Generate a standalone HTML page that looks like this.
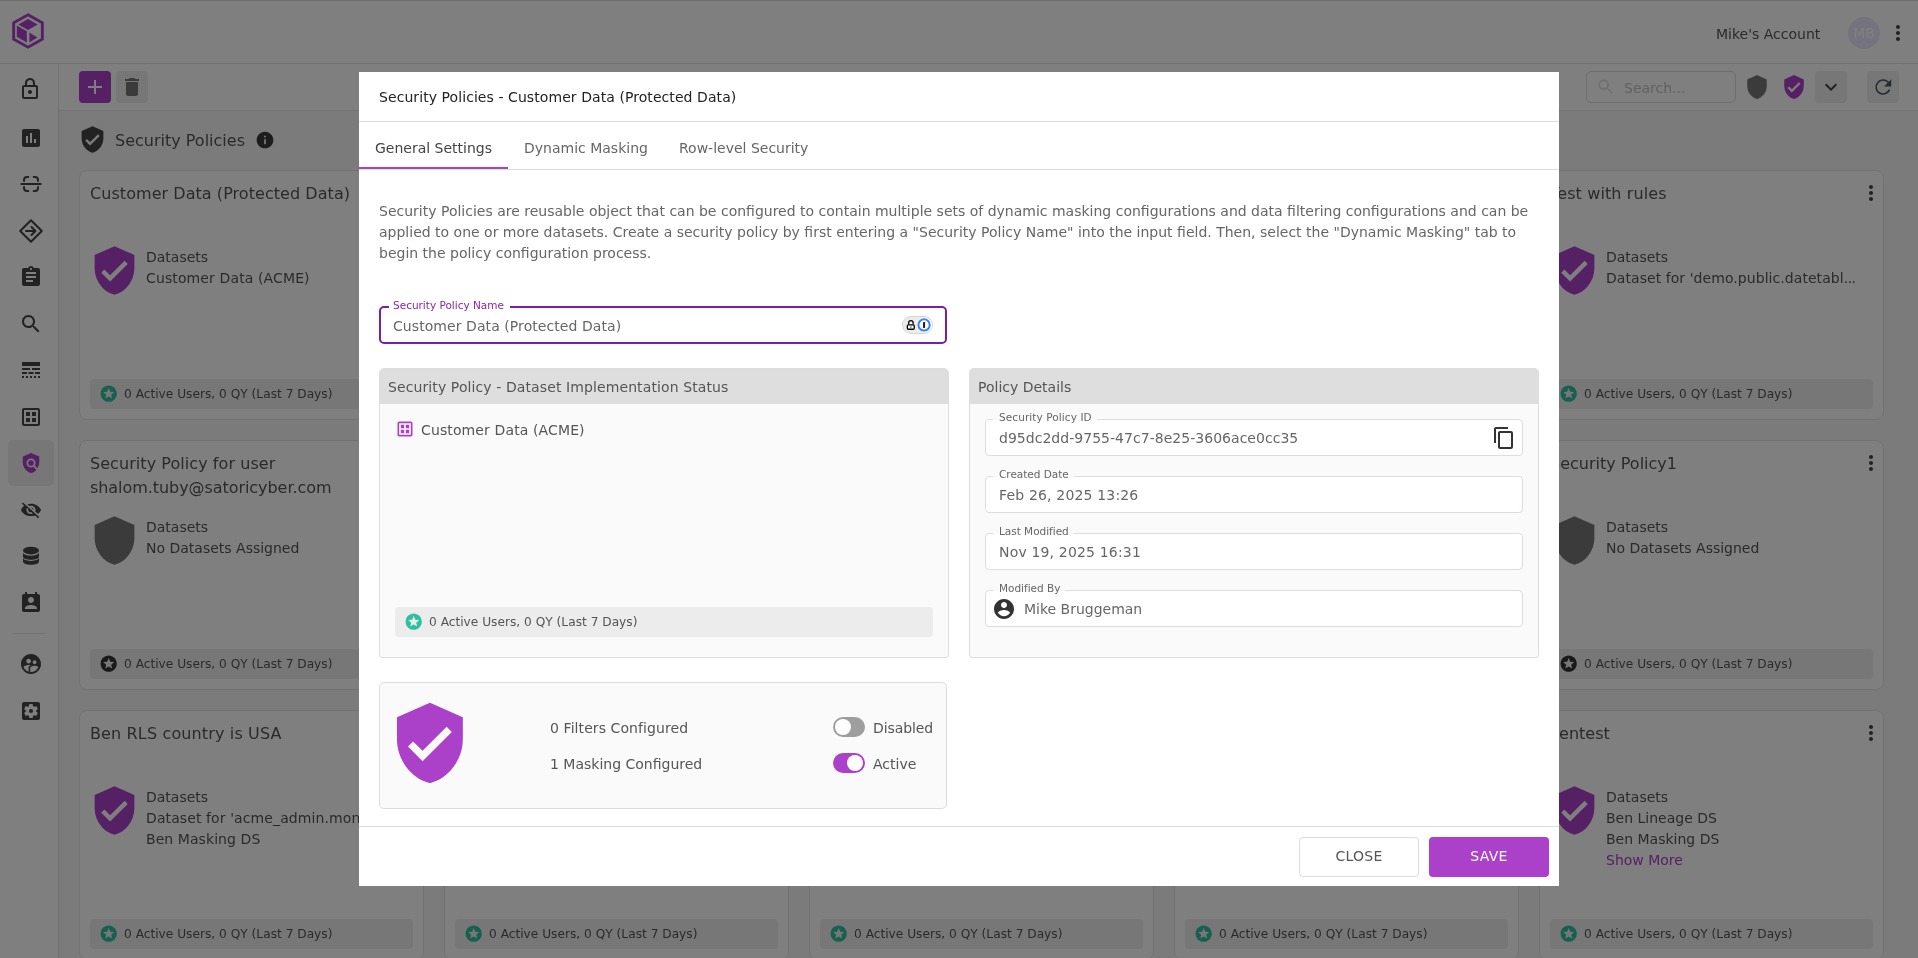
<!DOCTYPE html>
<html lang="en"><head><meta charset="utf-8"><title>Security Policies</title>
<style>
*{box-sizing:border-box;margin:0;padding:0}
html,body{width:1918px;height:958px;overflow:hidden;background:#f7f7f7;font-family:"DejaVu Sans","Liberation Sans",sans-serif;}
.a{position:absolute}
.t{white-space:nowrap}
#bg{position:absolute;left:0;top:0;width:1918px;height:958px;overflow:hidden;will-change:transform}
#modal{will-change:transform}
#ov{position:absolute;left:0;top:0;width:1918px;height:958px;background:rgba(0,0,0,.5)}
.card{position:absolute;width:345px;height:250px;background:#fff;border:1px solid #e4e4e4;border-radius:8px;overflow:hidden}
.chip{position:absolute;left:10px;top:208px;width:323px;height:30px;background:#efefef;border-radius:4px}
.fs{position:absolute;left:15px;width:538px;height:37px;border:1px solid #ddd;border-radius:4px;background:#fff}
.fs .lb{position:absolute;left:7px;top:-10px;padding:0 5px 0 6px;font-size:10.5px;line-height:14px;color:#666;white-space:nowrap;background:linear-gradient(#fafafa 0,#fafafa 10px,#fff 10px)}
.fs .v{position:absolute;left:13px;top:8px;font-size:14px;line-height:21px;color:#666;white-space:nowrap;letter-spacing:.17px}
</style></head><body>
<div id="bg">

<div class="a" style="left:0;top:0;width:1918px;height:64px;background:#fff;border-bottom:1px solid #e4e4e4;border-top:1px solid #dcdcdc"></div>
<div class="a" style="left:0;top:64px;width:59px;height:894px;background:#fff;border-right:1px solid #e4e4e4"></div>
<div class="a" style="left:59px;top:64px;width:1859px;height:47px;background:#fff;border-bottom:1px solid #e4e4e4"></div>
<svg class="a" style="left:12.3px;top:13px" width="32" height="36" viewBox="0 0 32 36" ><polygon points="16,1.8 30.35,9.8 30.35,26.2 16,34.2 1.65,26.2 1.65,9.8" fill="none" stroke="#ab40c9" stroke-width="2.9" stroke-linejoin="miter"/><polygon points="16,6.0 25.6,11.6 16,17 6.4,11.6" fill="#ab40c9"/><polygon points="4.8,12.4 14.8,18.2 14.8,29.6 4.8,23.8" fill="#ab40c9"/><polygon points="17.4,19.6 25.4,24.6 17.4,29.6" fill="#ab40c9"/></svg>
<div class="a t" style="left:1716px;top:24px;font-size:14px;line-height:21px;color:#555;">Mike's Account</div>
<div class="a" style="left:1848px;top:17px;width:32px;height:32px;border-radius:50%;background:#ebe6fb"></div>
<div class="a t" style="left:1853px;top:23px;font-size:14px;line-height:21px;color:#fff;width:22px;text-align:center;">MB</div>
<svg class="a" style="left:1886px;top:21px" width="24" height="24" viewBox="0 0 24 24" fill="#444" ><path d="M12 8c1.1 0 2-.9 2-2s-.9-2-2-2-2 .9-2 2 .9 2 2 2zm0 2c-1.1 0-2 .9-2 2s.9 2 2 2 2-.9 2-2-.9-2-2-2zm0 6c-1.1 0-2 .9-2 2s.9 2 2 2 2-.9 2-2-.9-2-2-2z"/></svg>
<svg class="a" style="left:18px;top:77px" width="24" height="24" viewBox="0 0 24 24" fill="#444" ><path d="M18 8h-1V6c0-2.76-2.24-5-5-5S7 3.24 7 6v2H6c-1.1 0-2 .9-2 2v10c0 1.1.9 2 2 2h12c1.1 0 2-.9 2-2V10c0-1.1-.9-2-2-2zM9 6c0-1.66 1.34-3 3-3s3 1.34 3 3v2H9V6zm9 14H6V10h12v10zm-6-3c1.1 0 2-.9 2-2s-.9-2-2-2-2 .9-2 2 .9 2 2 2z"/></svg>
<svg class="a" style="left:19px;top:126px" width="24" height="24" viewBox="0 0 24 24" fill="#444" ><path d="M19 3H5c-1.1 0-2 .9-2 2v14c0 1.1.9 2 2 2h14c1.1 0 2-.9 2-2V5c0-1.1-.9-2-2-2zM9 17H7v-7h2v7zm4 0h-2V7h2v10zm4 0h-2v-4h2v4z"/></svg>
<svg class="a" style="left:19px;top:172px" width="24" height="24" viewBox="0 0 24 24" ><g fill="none" stroke="#444" stroke-width="2" stroke-linecap="round"><path d="M5 9V8a3 3 0 0 1 3-3h1.3M14.7 5H16a3 3 0 0 1 3 3v1M19 15v1a3 3 0 0 1-3 3h-1.3M9.300 19H8a3 3 0 0 1-3-3v-1"/><path d="M2.400 12h19.300"/></g></svg>
<svg class="a" style="left:19px;top:219px" width="24" height="24" viewBox="0 0 24 24" ><g fill="none" stroke="#444" stroke-width="2" stroke-linecap="round" stroke-linejoin="round"><path d="M12 1.200L22.800 12 12 22.800 1.200 12z"/><path d="M7 12h9M12.5 8l4 4-4 4"/></g></svg>
<svg class="a" style="left:19px;top:265px" width="24" height="24" viewBox="0 0 24 24" fill="#444" ><path d="M19 3h-4.18C14.4 1.84 13.3 1 12 1c-1.3 0-2.4.84-2.82 2H5c-1.1 0-2 .9-2 2v14c0 1.1.9 2 2 2h14c1.1 0 2-.9 2-2V5c0-1.1-.9-2-2-2zm-7 0c.55 0 1 .45 1 1s-.45 1-1 1-1-.45-1-1 .45-1 1-1zm2 14H7v-2h7v2zm3-4H7v-2h10v2zm0-4H7V7h10v2z"/></svg>
<svg class="a" style="left:19px;top:312px" width="24" height="24" viewBox="0 0 24 24" fill="#444" ><path d="M15.5 14h-.79l-.28-.27C15.41 12.59 16 11.11 16 9.5 16 5.91 13.09 3 9.5 3S3 5.91 3 9.5 5.91 16 9.5 16c1.61 0 3.09-.59 4.23-1.57l.27.28v.79l5 4.99L20.49 19l-4.99-5zm-6 0C7.01 14 5 11.99 5 9.5S7.01 5 9.5 5 14 7.01 14 9.5 11.99 14 9.5 14z"/></svg>
<svg class="a" style="left:19px;top:358px" width="24" height="24" viewBox="0 0 24 24" fill="#444" ><path d="M3 16h5v-2H3v2zm6.5 0h5v-2h-5v2zm6.5 0h5v-2h-5v2zM3 20h2v-2H3v2zm4 0h2v-2H7v2zm4 0h2v-2h-2v2zm4 0h2v-2h-2v2zm4 0h2v-2h-2v2zM3 12h8v-2H3v2zm10 0h8v-2h-8v2zM3 4v4h18V4H3z"/></svg>
<svg class="a" style="left:19px;top:405px" width="24" height="24" viewBox="0 0 24 24" fill="#444" ><path d="M19 3H5c-1.1 0-2 .9-2 2v14c0 1.1.9 2 2 2h14c1.1 0 2-.9 2-2V5c0-1.1-.9-2-2-2zm0 16H5V5h14v14zM7 7h4v4H7V7zm6 0h4v4h-4V7zm-6 6h4v4H7v-4zm6 0h4v4h-4v-4z"/></svg>
<div class="a" style="left:8px;top:440px;width:46px;height:46px;border-radius:5px;background:#efefef"></div>
<svg class="a" style="left:20px;top:452px" width="22" height="22" viewBox="0 0 24 24" fill="#ab40c9" ><path d="M21 5l-9-4-9 4v6c0 5.55 3.84 10.74 9 12 2.3-.56 4.33-1.9 5.88-3.71l-3.12-3.12c-1.94 1.29-4.58 1.07-6.29-.64-1.95-1.95-1.95-5.12 0-7.07 1.95-1.95 5.12-1.95 7.07 0 1.71 1.71 1.92 4.35.64 6.29l2.9 2.9C20.29 15.69 21 13.38 21 11V5zM12 9a3 3 0 1 0 0 6 3 3 0 0 0 0-6z"/></svg>
<svg class="a" style="left:20px;top:500.3px" width="22" height="19.8" viewBox="0 0 24 24" fill="#444" preserveAspectRatio="none"><path d="M12 7c2.76 0 5 2.24 5 5 0 .65-.13 1.26-.36 1.83l2.92 2.92c1.51-1.26 2.7-2.89 3.43-4.75-1.73-4.39-6-7.5-11-7.5-1.4 0-2.74.25-3.98.7l2.16 2.16C10.74 7.13 11.35 7 12 7zM2 4.27l2.28 2.28.46.46C3.08 8.3 1.78 10.02 1 12c1.73 4.39 6 7.5 11 7.5 1.55 0 3.03-.3 4.38-.84l.42.42L19.73 22 21 20.73 3.27 3 2 4.27zM7.53 9.8l1.55 1.55c-.05.21-.08.43-.08.65 0 1.66 1.34 3 3 3 .22 0 .44-.03.65-.08l1.55 1.55c-.67.33-1.41.53-2.2.53-2.76 0-5-2.24-5-5 0-.79.2-1.53.53-2.2zm4.31-.78l3.15 3.15.02-.16c0-1.66-1.34-3-3-3l-.17.01z"/></svg>
<svg class="a" style="left:19px;top:544px" width="24" height="24" viewBox="0 0 24 24" ><g fill="#444"><ellipse cx="12" cy="6.6" rx="8" ry="3.9"/><path d="M4 8.3c0 2 3.6 3.400 8 3.400s8-1.400 8-3.400v4.100c0 2-3.600 3.300-8 3.300s-8-1.300-8-3.300z"/><path d="M4 13.600c0 2 3.600 3.300 8 3.300s8-1.300 8-3.300v3.900c0 2-3.600 3.300-8 3.300s-8-1.300-8-3.300z"/></g></svg>
<svg class="a" style="left:19px;top:591px" width="24" height="24" viewBox="0 0 24 24" fill="#444" ><path d="M19 3h-1V1h-2v2H8V1H6v2H5c-1.11 0-2 .9-2 2v14c0 1.1.89 2 2 2h14c1.1 0 2-.9 2-2V5c0-1.1-.9-2-2-2zm-7 3c1.66 0 3 1.34 3 3s-1.34 3-3 3-3-1.34-3-3 1.34-3 3-3zm6 12H6v-1c0-2 4-3.1 6-3.1s6 1.1 6 3.1v1z"/></svg>
<div class="a" style="left:13px;top:633px;width:32px;height:1px;background:#e4e4e4"></div>
<svg class="a" style="left:19px;top:652px" width="24" height="24" viewBox="0 0 24 24" fill="#444" ><path d="M11.99 2c-5.52 0-10 4.48-10 10s4.48 10 10 10 10-4.48 10-10-4.48-10-10-10zm3.61 6.34c1.07 0 1.93.86 1.93 1.93 0 1.07-.86 1.93-1.93 1.93-1.07 0-1.93-.86-1.93-1.93-.01-1.07.86-1.93 1.93-1.93zm-6-1.58c1.3 0 2.36 1.06 2.36 2.36 0 1.3-1.06 2.36-2.36 2.36s-2.36-1.06-2.36-2.36c0-1.31 1.05-2.36 2.36-2.36zm0 9.13v3.75c-2.4-.75-4.3-2.6-5.14-4.96 1.05-1.12 3.67-1.69 5.14-1.69.53 0 1.2.08 1.9.22-1.64.87-1.9 2.02-1.9 2.68zM11.99 20c-.27 0-.53-.01-.79-.04v-4.07c0-1.42 2.94-2.13 4.4-2.13 1.07 0 2.92.39 3.84 1.15-1.17 2.97-4.06 5.09-7.45 5.09z"/></svg>
<svg class="a" style="left:19px;top:699px" width="24" height="24" viewBox="0 0 24 24" fill="#444" ><path d="M12 10c-1.1 0-2 .9-2 2s.9 2 2 2 2-.9 2-2-.9-2-2-2zm7-7H5c-1.11 0-2 .9-2 2v14c0 1.1.89 2 2 2h14c1.11 0 2-.9 2-2V5c0-1.1-.89-2-2-2zm-1.75 9c0 .23-.02.46-.05.68l1.48 1.16c.13.11.17.3.08.45l-1.4 2.42c-.09.15-.27.21-.43.15l-1.74-.7c-.36.28-.76.51-1.18.69l-.26 1.85c-.03.17-.18.3-.35.3h-2.8c-.17 0-.32-.13-.35-.29l-.26-1.85c-.43-.18-.82-.41-1.18-.69l-1.74.7c-.16.06-.34 0-.43-.15l-1.4-2.42c-.09-.15-.05-.34.08-.45l1.48-1.16c-.03-.23-.05-.46-.05-.69 0-.23.02-.46.05-.68l-1.48-1.16c-.13-.11-.17-.3-.08-.45l1.4-2.42c.09-.15.27-.21.43-.15l1.74.7c.36-.28.76-.51 1.18-.69l.26-1.85c.03-.17.18-.3.35-.3h2.8c.17 0 .32.13.35.29l.26 1.85c.43.18.82.41 1.18.69l1.74-.7c.16-.06.34 0 .43.15l1.4 2.42c.09.15.05.34-.08.45l-1.48 1.16c.03.23.05.46.05.69z"/></svg>
<div class="a" style="left:79px;top:71px;width:32px;height:32px;border-radius:4px;background:#ab40c9"></div>
<svg class="a" style="left:83px;top:75px" width="24" height="24" viewBox="0 0 24 24" fill="#fff" ><path d="M19 13h-6v6h-2v-6H5v-2h6V5h2v6h6v2z"/></svg>
<div class="a" style="left:116px;top:71px;width:32px;height:32px;border-radius:4px;background:#efefef"></div>
<svg class="a" style="left:120px;top:75px" width="24" height="24" viewBox="0 0 24 24" fill="#777" ><path d="M6 19c0 1.1.9 2 2 2h8c1.1 0 2-.9 2-2V7H6v12zM19 4h-3.5l-1-1h-5l-1 1H5v2h14V4z"/></svg>
<div class="a" style="left:1586px;top:71px;width:150px;height:32px;border-radius:5px;border:1px solid #dcdcdc;background:#fff"></div>
<svg class="a" style="left:1596.2px;top:77px" width="19.5" height="19.5" viewBox="0 0 24 24" fill="#dedede" ><path d="M15.5 14h-.79l-.28-.27C15.41 12.59 16 11.11 16 9.5 16 5.91 13.09 3 9.5 3S3 5.91 3 9.5 5.91 16 9.5 16c1.61 0 3.09-.59 4.23-1.57l.27.28v.79l5 4.99L20.49 19l-4.99-5zm-6 0C7.01 14 5 11.99 5 9.5S7.01 5 9.5 5 14 7.01 14 9.5 11.99 14 9.5 14z"/></svg>
<div class="a t" style="left:1624px;top:78px;font-size:14px;line-height:21px;color:#c2c2c2;">Search...</div>
<svg class="a" style="left:1744px;top:74px" width="26" height="26" viewBox="0 0 24 24" fill="#777" ><path d="M12 1L3 5v6c0 5.55 3.84 10.74 9 12 5.16-1.26 9-6.45 9-12V5l-9-4z"/></svg>
<svg class="a" style="left:1781px;top:74px" width="26" height="26" viewBox="0 0 24 24" fill="#ab40c9" ><path d="M12 1L3 5v6c0 5.55 3.84 10.74 9 12 5.16-1.26 9-6.45 9-12V5l-9-4zm-2 16l-4-4 1.41-1.41L10 14.17l6.59-6.59L18 9l-8 8z"/></svg>
<div class="a" style="left:1815px;top:71px;width:32px;height:32px;border-radius:4px;background:#efefef"></div>
<svg class="a" style="left:1819px;top:75px" width="24" height="24" viewBox="0 0 24 24" fill="#444" ><path d="M16.59 8.59L12 13.17 7.41 8.59 6 10l6 6 6-6z"/></svg>
<div class="a" style="left:1867px;top:71px;width:32px;height:32px;border-radius:4px;background:#efefef"></div>
<svg class="a" style="left:1871px;top:75px" width="24" height="24" viewBox="0 0 24 24" ><g fill="none" stroke="#3f5866" stroke-width="1.6"><path d="M18.6 14.6A7 7 0 1 1 17.2 7.2"/></g><path d="M20.200 4.300v7.100h-7.100z" fill="#3f5866"/></svg>
<svg class="a" style="left:77.6px;top:125.3px" width="29" height="29" viewBox="0 0 24 24" fill="#444" ><path d="M12 1L3 5v6c0 5.55 3.84 10.74 9 12 5.16-1.26 9-6.45 9-12V5l-9-4zm-2 16l-4-4 1.41-1.41L10 14.17l6.59-6.59L18 9l-8 8z"/></svg>
<div class="a t" style="left:115px;top:129px;font-size:16px;line-height:24px;color:#555;">Security Policies</div>
<svg class="a" style="left:255px;top:130px" width="20" height="20" viewBox="0 0 24 24" fill="#3a3a3a" ><path d="M12 2C6.48 2 2 6.48 2 12s4.48 10 10 10 10-4.48 10-10S17.52 2 12 2zm1 15h-2v-6h2v6zm0-8h-2V7h2v2z"/></svg>
<div class="card" style="left:79px;top:170px"><div class="a" style="left:10px;top:11px;width:290px;font-size:16px;line-height:24px;color:#555"><span style='letter-spacing:.055px'>Customer Data (Protected Data)</span></div><svg class="a" style="left:319px;top:10px" width="24" height="24" viewBox="0 0 24 24" fill="#444" ><path d="M12 8c1.1 0 2-.9 2-2s-.9-2-2-2-2 .9-2 2 .9 2 2 2zm0 2c-1.1 0-2 .9-2 2s.9 2 2 2 2-.9 2-2-.9-2-2-2zm0 6c-1.1 0-2 .9-2 2s.9 2 2 2 2-.9 2-2-.9-2-2-2z"/></svg><svg class="a" style="left:7.95px;top:72.9px" width="53" height="53" viewBox="0 0 24 24" fill="#ab40c9" ><path d="M12 1L3 5v6c0 5.55 3.84 10.74 9 12 5.16-1.26 9-6.45 9-12V5l-9-4zm-2 16l-4-4 1.41-1.41L10 14.17l6.59-6.59L18 9l-8 8z"/></svg><div class="a t" style="left:66px;top:76px;font-size:14px;line-height:21px;color:#555">Datasets<br><span style='letter-spacing:.12px'>Customer Data (ACME)</span></div><div class="chip"><svg class="a" style="left:9.3px;top:5.3px" width="19.4" height="19.4" viewBox="0 0 24 24" fill="#2cc1a0" ><path d="M11.99 2C6.47 2 2 6.48 2 12s4.47 10 9.99 10C17.52 22 22 17.52 22 12S17.52 2 11.99 2zm4.24 16L12 15.45 7.77 18l1.12-4.81-3.73-3.23 4.92-.42L12 5l1.92 4.53 4.92.42-3.73 3.23L16.23 18z"/></svg><div class="a t" style="left:34px;top:6px;font-size:12.2px;line-height:18px;color:#555">0 Active Users, 0 QY (Last 7 Days)</div></div></div>
<div class="card" style="left:444px;top:170px"><div class="a" style="left:10px;top:11px;width:290px;font-size:16px;line-height:24px;color:#555">Finance Data Masking</div><svg class="a" style="left:319px;top:10px" width="24" height="24" viewBox="0 0 24 24" fill="#444" ><path d="M12 8c1.1 0 2-.9 2-2s-.9-2-2-2-2 .9-2 2 .9 2 2 2zm0 2c-1.1 0-2 .9-2 2s.9 2 2 2 2-.9 2-2-.9-2-2-2zm0 6c-1.1 0-2 .9-2 2s.9 2 2 2 2-.9 2-2-.9-2-2-2z"/></svg><svg class="a" style="left:7.95px;top:72.9px" width="53" height="53" viewBox="0 0 24 24" fill="#ab40c9" ><path d="M12 1L3 5v6c0 5.55 3.84 10.74 9 12 5.16-1.26 9-6.45 9-12V5l-9-4zm-2 16l-4-4 1.41-1.41L10 14.17l6.59-6.59L18 9l-8 8z"/></svg><div class="a t" style="left:66px;top:76px;font-size:14px;line-height:21px;color:#555">Datasets<br>Finance DS</div><div class="chip"><svg class="a" style="left:9.3px;top:5.3px" width="19.4" height="19.4" viewBox="0 0 24 24" fill="#2cc1a0" ><path d="M11.99 2C6.47 2 2 6.48 2 12s4.47 10 9.99 10C17.52 22 22 17.52 22 12S17.52 2 11.99 2zm4.24 16L12 15.45 7.77 18l1.12-4.81-3.73-3.23 4.92-.42L12 5l1.92 4.53 4.92.42-3.73 3.23L16.23 18z"/></svg><div class="a t" style="left:34px;top:6px;font-size:12.2px;line-height:18px;color:#555">0 Active Users, 0 QY (Last 7 Days)</div></div></div>
<div class="card" style="left:809px;top:170px"><div class="a" style="left:10px;top:11px;width:290px;font-size:16px;line-height:24px;color:#555">HR Records Policy</div><svg class="a" style="left:319px;top:10px" width="24" height="24" viewBox="0 0 24 24" fill="#444" ><path d="M12 8c1.1 0 2-.9 2-2s-.9-2-2-2-2 .9-2 2 .9 2 2 2zm0 2c-1.1 0-2 .9-2 2s.9 2 2 2 2-.9 2-2-.9-2-2-2zm0 6c-1.1 0-2 .9-2 2s.9 2 2 2 2-.9 2-2-.9-2-2-2z"/></svg><svg class="a" style="left:7.95px;top:72.9px" width="53" height="53" viewBox="0 0 24 24" fill="#ab40c9" ><path d="M12 1L3 5v6c0 5.55 3.84 10.74 9 12 5.16-1.26 9-6.45 9-12V5l-9-4zm-2 16l-4-4 1.41-1.41L10 14.17l6.59-6.59L18 9l-8 8z"/></svg><div class="a t" style="left:66px;top:76px;font-size:14px;line-height:21px;color:#555">Datasets<br>HR DS</div><div class="chip"><svg class="a" style="left:9.3px;top:5.3px" width="19.4" height="19.4" viewBox="0 0 24 24" fill="#2cc1a0" ><path d="M11.99 2C6.47 2 2 6.48 2 12s4.47 10 9.99 10C17.52 22 22 17.52 22 12S17.52 2 11.99 2zm4.24 16L12 15.45 7.77 18l1.12-4.81-3.73-3.23 4.92-.42L12 5l1.92 4.53 4.92.42-3.73 3.23L16.23 18z"/></svg><div class="a t" style="left:34px;top:6px;font-size:12.2px;line-height:18px;color:#555">0 Active Users, 0 QY (Last 7 Days)</div></div></div>
<div class="card" style="left:1174px;top:170px"><div class="a" style="left:10px;top:11px;width:290px;font-size:16px;line-height:24px;color:#555">Marketing Analytics</div><svg class="a" style="left:319px;top:10px" width="24" height="24" viewBox="0 0 24 24" fill="#444" ><path d="M12 8c1.1 0 2-.9 2-2s-.9-2-2-2-2 .9-2 2 .9 2 2 2zm0 2c-1.1 0-2 .9-2 2s.9 2 2 2 2-.9 2-2-.9-2-2-2zm0 6c-1.1 0-2 .9-2 2s.9 2 2 2 2-.9 2-2-.9-2-2-2z"/></svg><svg class="a" style="left:7.95px;top:72.9px" width="53" height="53" viewBox="0 0 24 24" fill="#777" ><path d="M12 1L3 5v6c0 5.55 3.84 10.74 9 12 5.16-1.26 9-6.45 9-12V5l-9-4z"/></svg><div class="a t" style="left:66px;top:76px;font-size:14px;line-height:21px;color:#555">Datasets<br>No Datasets Assigned</div><div class="chip"><svg class="a" style="left:9.3px;top:5.3px" width="19.4" height="19.4" viewBox="0 0 24 24" fill="#333" ><path d="M11.99 2C6.47 2 2 6.48 2 12s4.47 10 9.99 10C17.52 22 22 17.52 22 12S17.52 2 11.99 2zm4.24 16L12 15.45 7.77 18l1.12-4.81-3.73-3.23 4.92-.42L12 5l1.92 4.53 4.92.42-3.73 3.23L16.23 18z"/></svg><div class="a t" style="left:34px;top:6px;font-size:12.2px;line-height:18px;color:#555">0 Active Users, 0 QY (Last 7 Days)</div></div></div>
<div class="card" style="left:1539px;top:170px"><div class="a" style="left:10px;top:11px;width:290px;font-size:16px;line-height:24px;color:#555"><span style='letter-spacing:.12px'>Test with rules</span></div><svg class="a" style="left:319px;top:10px" width="24" height="24" viewBox="0 0 24 24" fill="#444" ><path d="M12 8c1.1 0 2-.9 2-2s-.9-2-2-2-2 .9-2 2 .9 2 2 2zm0 2c-1.1 0-2 .9-2 2s.9 2 2 2 2-.9 2-2-.9-2-2-2zm0 6c-1.1 0-2 .9-2 2s.9 2 2 2 2-.9 2-2-.9-2-2-2z"/></svg><svg class="a" style="left:7.95px;top:72.9px" width="53" height="53" viewBox="0 0 24 24" fill="#ab40c9" ><path d="M12 1L3 5v6c0 5.55 3.84 10.74 9 12 5.16-1.26 9-6.45 9-12V5l-9-4zm-2 16l-4-4 1.41-1.41L10 14.17l6.59-6.59L18 9l-8 8z"/></svg><div class="a t" style="left:66px;top:76px;font-size:14px;line-height:21px;color:#555">Datasets<br><span style='letter-spacing:.06px'>Dataset for 'demo.public.datetabl</span><span style='letter-spacing:-.5px'>...</span></div><div class="chip"><svg class="a" style="left:9.3px;top:5.3px" width="19.4" height="19.4" viewBox="0 0 24 24" fill="#2cc1a0" ><path d="M11.99 2C6.47 2 2 6.48 2 12s4.47 10 9.99 10C17.52 22 22 17.52 22 12S17.52 2 11.99 2zm4.24 16L12 15.45 7.77 18l1.12-4.81-3.73-3.23 4.92-.42L12 5l1.92 4.53 4.92.42-3.73 3.23L16.23 18z"/></svg><div class="a t" style="left:34px;top:6px;font-size:12.2px;line-height:18px;color:#555">0 Active Users, 0 QY (Last 7 Days)</div></div></div>
<div class="card" style="left:79px;top:440px"><div class="a" style="left:10px;top:11px;width:290px;font-size:16px;line-height:24px;color:#555"><span style='letter-spacing:.06px'>Security Policy for user</span><br><span style='letter-spacing:-.06px'>shalom.tuby@satoricyber.com</span></div><svg class="a" style="left:319px;top:10px" width="24" height="24" viewBox="0 0 24 24" fill="#444" ><path d="M12 8c1.1 0 2-.9 2-2s-.9-2-2-2-2 .9-2 2 .9 2 2 2zm0 2c-1.1 0-2 .9-2 2s.9 2 2 2 2-.9 2-2-.9-2-2-2zm0 6c-1.1 0-2 .9-2 2s.9 2 2 2 2-.9 2-2-.9-2-2-2z"/></svg><svg class="a" style="left:7.95px;top:72.9px" width="53" height="53" viewBox="0 0 24 24" fill="#777" ><path d="M12 1L3 5v6c0 5.55 3.84 10.74 9 12 5.16-1.26 9-6.45 9-12V5l-9-4z"/></svg><div class="a t" style="left:66px;top:76px;font-size:14px;line-height:21px;color:#555">Datasets<br>No Datasets Assigned</div><div class="chip"><svg class="a" style="left:9.3px;top:5.3px" width="19.4" height="19.4" viewBox="0 0 24 24" fill="#333" ><path d="M11.99 2C6.47 2 2 6.48 2 12s4.47 10 9.99 10C17.52 22 22 17.52 22 12S17.52 2 11.99 2zm4.24 16L12 15.45 7.77 18l1.12-4.81-3.73-3.23 4.92-.42L12 5l1.92 4.53 4.92.42-3.73 3.23L16.23 18z"/></svg><div class="a t" style="left:34px;top:6px;font-size:12.2px;line-height:18px;color:#555">0 Active Users, 0 QY (Last 7 Days)</div></div></div>
<div class="card" style="left:444px;top:440px"><div class="a" style="left:10px;top:11px;width:290px;font-size:16px;line-height:24px;color:#555">Sales Policy</div><svg class="a" style="left:319px;top:10px" width="24" height="24" viewBox="0 0 24 24" fill="#444" ><path d="M12 8c1.1 0 2-.9 2-2s-.9-2-2-2-2 .9-2 2 .9 2 2 2zm0 2c-1.1 0-2 .9-2 2s.9 2 2 2 2-.9 2-2-.9-2-2-2zm0 6c-1.1 0-2 .9-2 2s.9 2 2 2 2-.9 2-2-.9-2-2-2z"/></svg><svg class="a" style="left:7.95px;top:72.9px" width="53" height="53" viewBox="0 0 24 24" fill="#777" ><path d="M12 1L3 5v6c0 5.55 3.84 10.74 9 12 5.16-1.26 9-6.45 9-12V5l-9-4z"/></svg><div class="a t" style="left:66px;top:76px;font-size:14px;line-height:21px;color:#555">Datasets<br>No Datasets Assigned</div><div class="chip"><svg class="a" style="left:9.3px;top:5.3px" width="19.4" height="19.4" viewBox="0 0 24 24" fill="#333" ><path d="M11.99 2C6.47 2 2 6.48 2 12s4.47 10 9.99 10C17.52 22 22 17.52 22 12S17.52 2 11.99 2zm4.24 16L12 15.45 7.77 18l1.12-4.81-3.73-3.23 4.92-.42L12 5l1.92 4.53 4.92.42-3.73 3.23L16.23 18z"/></svg><div class="a t" style="left:34px;top:6px;font-size:12.2px;line-height:18px;color:#555">0 Active Users, 0 QY (Last 7 Days)</div></div></div>
<div class="card" style="left:809px;top:440px"><div class="a" style="left:10px;top:11px;width:290px;font-size:16px;line-height:24px;color:#555">Support Policy</div><svg class="a" style="left:319px;top:10px" width="24" height="24" viewBox="0 0 24 24" fill="#444" ><path d="M12 8c1.1 0 2-.9 2-2s-.9-2-2-2-2 .9-2 2 .9 2 2 2zm0 2c-1.1 0-2 .9-2 2s.9 2 2 2 2-.9 2-2-.9-2-2-2zm0 6c-1.1 0-2 .9-2 2s.9 2 2 2 2-.9 2-2-.9-2-2-2z"/></svg><svg class="a" style="left:7.95px;top:72.9px" width="53" height="53" viewBox="0 0 24 24" fill="#ab40c9" ><path d="M12 1L3 5v6c0 5.55 3.84 10.74 9 12 5.16-1.26 9-6.45 9-12V5l-9-4zm-2 16l-4-4 1.41-1.41L10 14.17l6.59-6.59L18 9l-8 8z"/></svg><div class="a t" style="left:66px;top:76px;font-size:14px;line-height:21px;color:#555">Datasets<br>Support DS</div><div class="chip"><svg class="a" style="left:9.3px;top:5.3px" width="19.4" height="19.4" viewBox="0 0 24 24" fill="#2cc1a0" ><path d="M11.99 2C6.47 2 2 6.48 2 12s4.47 10 9.99 10C17.52 22 22 17.52 22 12S17.52 2 11.99 2zm4.24 16L12 15.45 7.77 18l1.12-4.81-3.73-3.23 4.92-.42L12 5l1.92 4.53 4.92.42-3.73 3.23L16.23 18z"/></svg><div class="a t" style="left:34px;top:6px;font-size:12.2px;line-height:18px;color:#555">0 Active Users, 0 QY (Last 7 Days)</div></div></div>
<div class="card" style="left:1174px;top:440px"><div class="a" style="left:10px;top:11px;width:290px;font-size:16px;line-height:24px;color:#555">Operations Policy</div><svg class="a" style="left:319px;top:10px" width="24" height="24" viewBox="0 0 24 24" fill="#444" ><path d="M12 8c1.1 0 2-.9 2-2s-.9-2-2-2-2 .9-2 2 .9 2 2 2zm0 2c-1.1 0-2 .9-2 2s.9 2 2 2 2-.9 2-2-.9-2-2-2zm0 6c-1.1 0-2 .9-2 2s.9 2 2 2 2-.9 2-2-.9-2-2-2z"/></svg><svg class="a" style="left:7.95px;top:72.9px" width="53" height="53" viewBox="0 0 24 24" fill="#ab40c9" ><path d="M12 1L3 5v6c0 5.55 3.84 10.74 9 12 5.16-1.26 9-6.45 9-12V5l-9-4zm-2 16l-4-4 1.41-1.41L10 14.17l6.59-6.59L18 9l-8 8z"/></svg><div class="a t" style="left:66px;top:76px;font-size:14px;line-height:21px;color:#555">Datasets<br>Ops DS</div><div class="chip"><svg class="a" style="left:9.3px;top:5.3px" width="19.4" height="19.4" viewBox="0 0 24 24" fill="#2cc1a0" ><path d="M11.99 2C6.47 2 2 6.48 2 12s4.47 10 9.99 10C17.52 22 22 17.52 22 12S17.52 2 11.99 2zm4.24 16L12 15.45 7.77 18l1.12-4.81-3.73-3.23 4.92-.42L12 5l1.92 4.53 4.92.42-3.73 3.23L16.23 18z"/></svg><div class="a t" style="left:34px;top:6px;font-size:12.2px;line-height:18px;color:#555">0 Active Users, 0 QY (Last 7 Days)</div></div></div>
<div class="card" style="left:1539px;top:440px"><div class="a" style="left:10px;top:11px;width:290px;font-size:16px;line-height:24px;color:#555">Security Policy1</div><svg class="a" style="left:319px;top:10px" width="24" height="24" viewBox="0 0 24 24" fill="#444" ><path d="M12 8c1.1 0 2-.9 2-2s-.9-2-2-2-2 .9-2 2 .9 2 2 2zm0 2c-1.1 0-2 .9-2 2s.9 2 2 2 2-.9 2-2-.9-2-2-2zm0 6c-1.1 0-2 .9-2 2s.9 2 2 2 2-.9 2-2-.9-2-2-2z"/></svg><svg class="a" style="left:7.95px;top:72.9px" width="53" height="53" viewBox="0 0 24 24" fill="#777" ><path d="M12 1L3 5v6c0 5.55 3.84 10.74 9 12 5.16-1.26 9-6.45 9-12V5l-9-4z"/></svg><div class="a t" style="left:66px;top:76px;font-size:14px;line-height:21px;color:#555">Datasets<br>No Datasets Assigned</div><div class="chip"><svg class="a" style="left:9.3px;top:5.3px" width="19.4" height="19.4" viewBox="0 0 24 24" fill="#333" ><path d="M11.99 2C6.47 2 2 6.48 2 12s4.47 10 9.99 10C17.52 22 22 17.52 22 12S17.52 2 11.99 2zm4.24 16L12 15.45 7.77 18l1.12-4.81-3.73-3.23 4.92-.42L12 5l1.92 4.53 4.92.42-3.73 3.23L16.23 18z"/></svg><div class="a t" style="left:34px;top:6px;font-size:12.2px;line-height:18px;color:#555">0 Active Users, 0 QY (Last 7 Days)</div></div></div>
<div class="card" style="left:79px;top:710px"><div class="a" style="left:10px;top:11px;width:290px;font-size:16px;line-height:24px;color:#555"><span style='letter-spacing:.14px'>Ben RLS country is USA</span></div><svg class="a" style="left:319px;top:10px" width="24" height="24" viewBox="0 0 24 24" fill="#444" ><path d="M12 8c1.1 0 2-.9 2-2s-.9-2-2-2-2 .9-2 2 .9 2 2 2zm0 2c-1.1 0-2 .9-2 2s.9 2 2 2 2-.9 2-2-.9-2-2-2zm0 6c-1.1 0-2 .9-2 2s.9 2 2 2 2-.9 2-2-.9-2-2-2z"/></svg><svg class="a" style="left:7.95px;top:72.9px" width="53" height="53" viewBox="0 0 24 24" fill="#ab40c9" ><path d="M12 1L3 5v6c0 5.55 3.84 10.74 9 12 5.16-1.26 9-6.45 9-12V5l-9-4zm-2 16l-4-4 1.41-1.41L10 14.17l6.59-6.59L18 9l-8 8z"/></svg><div class="a t" style="left:66px;top:76px;font-size:14px;line-height:21px;color:#555">Datasets<br><span style='letter-spacing:.10px'>Dataset for 'acme_admin.mongo_customers'</span><br><span style='letter-spacing:.07px'>Ben Masking DS</span></div><div class="chip"><svg class="a" style="left:9.3px;top:5.3px" width="19.4" height="19.4" viewBox="0 0 24 24" fill="#2cc1a0" ><path d="M11.99 2C6.47 2 2 6.48 2 12s4.47 10 9.99 10C17.52 22 22 17.52 22 12S17.52 2 11.99 2zm4.24 16L12 15.45 7.77 18l1.12-4.81-3.73-3.23 4.92-.42L12 5l1.92 4.53 4.92.42-3.73 3.23L16.23 18z"/></svg><div class="a t" style="left:34px;top:6px;font-size:12.2px;line-height:18px;color:#555">0 Active Users, 0 QY (Last 7 Days)</div></div></div>
<div class="card" style="left:444px;top:710px"><div class="a" style="left:10px;top:11px;width:290px;font-size:16px;line-height:24px;color:#555">Ben Masking</div><svg class="a" style="left:319px;top:10px" width="24" height="24" viewBox="0 0 24 24" fill="#444" ><path d="M12 8c1.1 0 2-.9 2-2s-.9-2-2-2-2 .9-2 2 .9 2 2 2zm0 2c-1.1 0-2 .9-2 2s.9 2 2 2 2-.9 2-2-.9-2-2-2zm0 6c-1.1 0-2 .9-2 2s.9 2 2 2 2-.9 2-2-.9-2-2-2z"/></svg><svg class="a" style="left:7.95px;top:72.9px" width="53" height="53" viewBox="0 0 24 24" fill="#ab40c9" ><path d="M12 1L3 5v6c0 5.55 3.84 10.74 9 12 5.16-1.26 9-6.45 9-12V5l-9-4zm-2 16l-4-4 1.41-1.41L10 14.17l6.59-6.59L18 9l-8 8z"/></svg><div class="a t" style="left:66px;top:76px;font-size:14px;line-height:21px;color:#555">Datasets<br>Ben Masking DS</div><div class="chip"><svg class="a" style="left:9.3px;top:5.3px" width="19.4" height="19.4" viewBox="0 0 24 24" fill="#2cc1a0" ><path d="M11.99 2C6.47 2 2 6.48 2 12s4.47 10 9.99 10C17.52 22 22 17.52 22 12S17.52 2 11.99 2zm4.24 16L12 15.45 7.77 18l1.12-4.81-3.73-3.23 4.92-.42L12 5l1.92 4.53 4.92.42-3.73 3.23L16.23 18z"/></svg><div class="a t" style="left:34px;top:6px;font-size:12.2px;line-height:18px;color:#555">0 Active Users, 0 QY (Last 7 Days)</div></div></div>
<div class="card" style="left:809px;top:710px"><div class="a" style="left:10px;top:11px;width:290px;font-size:16px;line-height:24px;color:#555">Ben Lineage</div><svg class="a" style="left:319px;top:10px" width="24" height="24" viewBox="0 0 24 24" fill="#444" ><path d="M12 8c1.1 0 2-.9 2-2s-.9-2-2-2-2 .9-2 2 .9 2 2 2zm0 2c-1.1 0-2 .9-2 2s.9 2 2 2 2-.9 2-2-.9-2-2-2zm0 6c-1.1 0-2 .9-2 2s.9 2 2 2 2-.9 2-2-.9-2-2-2z"/></svg><svg class="a" style="left:7.95px;top:72.9px" width="53" height="53" viewBox="0 0 24 24" fill="#ab40c9" ><path d="M12 1L3 5v6c0 5.55 3.84 10.74 9 12 5.16-1.26 9-6.45 9-12V5l-9-4zm-2 16l-4-4 1.41-1.41L10 14.17l6.59-6.59L18 9l-8 8z"/></svg><div class="a t" style="left:66px;top:76px;font-size:14px;line-height:21px;color:#555">Datasets<br>Ben Lineage DS</div><div class="chip"><svg class="a" style="left:9.3px;top:5.3px" width="19.4" height="19.4" viewBox="0 0 24 24" fill="#2cc1a0" ><path d="M11.99 2C6.47 2 2 6.48 2 12s4.47 10 9.99 10C17.52 22 22 17.52 22 12S17.52 2 11.99 2zm4.24 16L12 15.45 7.77 18l1.12-4.81-3.73-3.23 4.92-.42L12 5l1.92 4.53 4.92.42-3.73 3.23L16.23 18z"/></svg><div class="a t" style="left:34px;top:6px;font-size:12.2px;line-height:18px;color:#555">0 Active Users, 0 QY (Last 7 Days)</div></div></div>
<div class="card" style="left:1174px;top:710px"><div class="a" style="left:10px;top:11px;width:290px;font-size:16px;line-height:24px;color:#555">Ben Test</div><svg class="a" style="left:319px;top:10px" width="24" height="24" viewBox="0 0 24 24" fill="#444" ><path d="M12 8c1.1 0 2-.9 2-2s-.9-2-2-2-2 .9-2 2 .9 2 2 2zm0 2c-1.1 0-2 .9-2 2s.9 2 2 2 2-.9 2-2-.9-2-2-2zm0 6c-1.1 0-2 .9-2 2s.9 2 2 2 2-.9 2-2-.9-2-2-2z"/></svg><svg class="a" style="left:7.95px;top:72.9px" width="53" height="53" viewBox="0 0 24 24" fill="#ab40c9" ><path d="M12 1L3 5v6c0 5.55 3.84 10.74 9 12 5.16-1.26 9-6.45 9-12V5l-9-4zm-2 16l-4-4 1.41-1.41L10 14.17l6.59-6.59L18 9l-8 8z"/></svg><div class="a t" style="left:66px;top:76px;font-size:14px;line-height:21px;color:#555">Datasets<br>Ben Test DS</div><div class="chip"><svg class="a" style="left:9.3px;top:5.3px" width="19.4" height="19.4" viewBox="0 0 24 24" fill="#2cc1a0" ><path d="M11.99 2C6.47 2 2 6.48 2 12s4.47 10 9.99 10C17.52 22 22 17.52 22 12S17.52 2 11.99 2zm4.24 16L12 15.45 7.77 18l1.12-4.81-3.73-3.23 4.92-.42L12 5l1.92 4.53 4.92.42-3.73 3.23L16.23 18z"/></svg><div class="a t" style="left:34px;top:6px;font-size:12.2px;line-height:18px;color:#555">0 Active Users, 0 QY (Last 7 Days)</div></div></div>
<div class="card" style="left:1539px;top:710px"><div class="a" style="left:10px;top:11px;width:290px;font-size:16px;line-height:24px;color:#555">Pentest</div><svg class="a" style="left:319px;top:10px" width="24" height="24" viewBox="0 0 24 24" fill="#444" ><path d="M12 8c1.1 0 2-.9 2-2s-.9-2-2-2-2 .9-2 2 .9 2 2 2zm0 2c-1.1 0-2 .9-2 2s.9 2 2 2 2-.9 2-2-.9-2-2-2zm0 6c-1.1 0-2 .9-2 2s.9 2 2 2 2-.9 2-2-.9-2-2-2z"/></svg><svg class="a" style="left:7.95px;top:72.9px" width="53" height="53" viewBox="0 0 24 24" fill="#ab40c9" ><path d="M12 1L3 5v6c0 5.55 3.84 10.74 9 12 5.16-1.26 9-6.45 9-12V5l-9-4zm-2 16l-4-4 1.41-1.41L10 14.17l6.59-6.59L18 9l-8 8z"/></svg><div class="a t" style="left:66px;top:76px;font-size:14px;line-height:21px;color:#555">Datasets<br>Ben Lineage DS<br>Ben Masking DS<br><span style='color:#ab40c9'>Show More</span></div><div class="chip"><svg class="a" style="left:9.3px;top:5.3px" width="19.4" height="19.4" viewBox="0 0 24 24" fill="#2cc1a0" ><path d="M11.99 2C6.47 2 2 6.48 2 12s4.47 10 9.99 10C17.52 22 22 17.52 22 12S17.52 2 11.99 2zm4.24 16L12 15.45 7.77 18l1.12-4.81-3.73-3.23 4.92-.42L12 5l1.92 4.53 4.92.42-3.73 3.23L16.23 18z"/></svg><div class="a t" style="left:34px;top:6px;font-size:12.2px;line-height:18px;color:#555">0 Active Users, 0 QY (Last 7 Days)</div></div></div>
</div><div id="ov"></div>
<div id="modal" class="a" style="left:359px;top:72px;width:1200px;height:814px;background:#fff">
<div class="a t" style="left:20px;top:15px;font-size:14px;line-height:21px;color:#222;letter-spacing:.07px;">Security Policies - Customer Data (Protected Data)</div>
<div class="a" style="left:0;top:49px;width:1200px;height:1px;background:#ddd"></div>
<div class="a t" style="left:16px;top:66px;font-size:14px;line-height:21px;color:#444;">General Settings</div>
<div class="a t" style="left:165px;top:66px;font-size:14px;line-height:21px;color:#666;">Dynamic Masking</div>
<div class="a t" style="left:320px;top:66px;font-size:14px;line-height:21px;color:#666;">Row-level Security</div>
<div class="a" style="left:0;top:97px;width:1200px;height:1px;background:#ddd"></div>
<div class="a" style="left:0;top:95px;width:149px;height:2px;background:#ab40c9"></div>
<div class="a" style="left:20px;top:129px;width:1160px;font-size:14px;line-height:21px;color:#666">Security Policies are reusable object that can be configured to contain multiple sets of dynamic masking configurations and data filtering configurations and can be applied to one or more datasets. Create a security policy by first entering a "Security Policy Name" into the input field. Then, select the "Dynamic Masking" tab to begin the policy configuration process.</div>
<div class="a" style="left:20px;top:234px;width:568px;height:38px;border:2px solid #7b1fa2;border-radius:5px"></div>
<div class="a t" style="left:30px;top:226px;padding:0 6px 0 4px;background:#fff;font-size:10.5px;line-height:14px;color:#8e24aa">Security Policy Name</div>
<div class="a t" style="left:34px;top:244px;font-size:14px;line-height:21px;color:#666;letter-spacing:.07px;">Customer Data (Protected Data)</div>
<svg class="a" style="left:543px;top:244px" width="31" height="18" viewBox="0 0 31 18" ><rect x="0.5" y="0.5" width="30" height="17" rx="8.5" fill="#ececec" stroke="#d6d6d6"/><circle cx="22.5" cy="9" r="7.6" fill="#fff"/><circle cx="22.05" cy="8.95" r="5.65" fill="#fff" stroke="#3b82f6" stroke-width="2"/><rect x="21.05" y="6" width="2" height="6" rx="0.4" fill="#1a1a1a"/><path d="M6.650 8.600V6.900a2.250 2.250 0 0 1 4.500 0V8.600" fill="#f4f4f4" stroke="#000" stroke-width="1.2"/><rect x="5.35" y="8.85" width="6.900" height="4.400" rx="1" fill="#fff" stroke="#000" stroke-width="1.3"/><rect x="8.05" y="10.350" width="1.500" height="1.400" fill="#666"/></svg>
<div class="a" style="left:20px;top:296px;width:570px;height:290px;background:#fafafa;border:1px solid #ddd;border-radius:5px 5px 3px 3px;overflow:hidden">
<div class="a" style="left:-1px;top:-1px;width:570px;height:36px;background:#dedede"></div>
<div class="a t" style="left:8px;top:8px;font-size:14px;line-height:21px;color:#555;letter-spacing:.1px;">Security Policy - Dataset Implementation Status</div>
<svg class="a" style="left:15px;top:50px" width="20" height="20" viewBox="0 0 24 24" fill="#ab40c9" ><path d="M19 3H5c-1.1 0-2 .9-2 2v14c0 1.1.9 2 2 2h14c1.1 0 2-.9 2-2V5c0-1.1-.9-2-2-2zm0 16H5V5h14v14zM7 7h4v4H7V7zm6 0h4v4h-4V7zm-6 6h4v4H7v-4zm6 0h4v4h-4v-4z"/></svg>
<div class="a t" style="left:41px;top:51px;font-size:14px;line-height:21px;color:#555;letter-spacing:.12px;">Customer Data (ACME)</div>
<div class="a" style="left:15px;top:238px;width:538px;height:30px;background:#ececec;border-radius:4px"><svg class="a" style="left:9.3px;top:5.3px" width="19.4" height="19.4" viewBox="0 0 24 24" fill="#2cc1a0" ><path d="M11.99 2C6.47 2 2 6.48 2 12s4.47 10 9.99 10C17.52 22 22 17.52 22 12S17.52 2 11.99 2zm4.24 16L12 15.45 7.77 18l1.12-4.81-3.73-3.23 4.92-.42L12 5l1.92 4.53 4.92.42-3.73 3.23L16.23 18z"/></svg><div class="a t" style="left:34px;top:6px;font-size:12.2px;line-height:18px;color:#555">0 Active Users, 0 QY (Last 7 Days)</div></div>
</div>
<div class="a" style="left:610px;top:296px;width:570px;height:290px;background:#fafafa;border:1px solid #ddd;border-radius:5px 5px 3px 3px">
<div class="a" style="left:-1px;top:-1px;width:570px;height:36px;background:#dedede;border-radius:5px 5px 0 0"></div>
<div class="a t" style="left:8px;top:8px;font-size:14px;line-height:21px;color:#555;">Policy Details</div>
<div class="fs" style="top:50px"><div class="lb" style="letter-spacing:.09px">Security Policy ID</div><div class="v" style="left:13px;letter-spacing:.03px">d95dc2dd-9755-47c7-8e25-3606ace0cc35</div></div>
<div class="fs" style="top:107px"><div class="lb" style="letter-spacing:-.02px">Created Date</div><div class="v" style="left:13px;letter-spacing:.17px">Feb 26, 2025 13:26</div></div>
<div class="fs" style="top:164px"><div class="lb" style="letter-spacing:-.02px">Last Modified</div><div class="v" style="left:13px;letter-spacing:.17px">Nov 19, 2025 16:31</div></div>
<div class="fs" style="top:221px"><div class="lb" style="letter-spacing:-.02px">Modified By</div><div class="v" style="left:38px;letter-spacing:-.01px">Mike Bruggeman</div></div>
<svg class="a" style="left:522px;top:57px" width="24" height="24" viewBox="0 0 24 24" fill="#333" ><path d="M16 1H4c-1.1 0-2 .9-2 2v14h2V3h12V1zm3 4H8c-1.1 0-2 .9-2 2v14c0 1.1.9 2 2 2h11c1.1 0 2-.9 2-2V7c0-1.1-.9-2-2-2zm0 16H8V7h11v14z"/></svg>
<svg class="a" style="left:22px;top:228px" width="24" height="24" viewBox="0 0 24 24" fill="#333" ><path d="M12 2C6.48 2 2 6.48 2 12s4.48 10 10 10 10-4.48 10-10S17.52 2 12 2zm0 3c1.66 0 3 1.34 3 3s-1.34 3-3 3-3-1.34-3-3 1.34-3 3-3zm0 14.2c-2.5 0-4.71-1.28-6-3.22.03-1.99 4-3.08 6-3.08 1.99 0 5.97 1.09 6 3.08-1.29 1.94-3.5 3.22-6 3.22z"/></svg>
</div>
<div class="a" style="left:20px;top:610px;width:568px;height:127px;background:#fafafa;border:1px solid #ddd;border-radius:5px">
<svg class="a" style="left:5.7px;top:16.3px" width="87.8" height="87.8" viewBox="0 0 24 24" fill="#ab40c9" ><path d="M12 1L3 5v6c0 5.55 3.84 10.74 9 12 5.16-1.26 9-6.45 9-12V5l-9-4zm-2 16l-4-4 1.41-1.41L10 14.17l6.59-6.59L18 9l-8 8z"/></svg>
<div class="a t" style="left:170px;top:35px;font-size:14px;line-height:21px;color:#555;letter-spacing:.08px;">0 Filters Configured</div>
<div class="a t" style="left:170px;top:71px;font-size:14px;line-height:21px;color:#555;">1 Masking Configured</div>
<div class="a" style="left:453px;top:34px;width:32px;height:20px;border-radius:10px;background:#9e9e9e"></div><div class="a" style="left:455px;top:36px;width:16px;height:16px;border-radius:50%;background:#fff"></div>
<div class="a t" style="left:493px;top:35px;font-size:14px;line-height:21px;color:#555;letter-spacing:-.1px;">Disabled</div>
<div class="a" style="left:453px;top:70px;width:32px;height:20px;border-radius:10px;background:#ab40c9"></div><div class="a" style="left:467px;top:72px;width:16px;height:16px;border-radius:50%;background:#fff"></div>
<div class="a t" style="left:493px;top:71px;font-size:14px;line-height:21px;color:#555;">Active</div>
</div>
<div class="a" style="left:0;top:754px;width:1200px;height:1px;background:#ddd"></div>
<div class="a t" style="left:940px;top:765px;width:120px;height:40px;border:1px solid #ddd;border-radius:4px;background:#fff;color:#555;font-size:14px;line-height:36px;letter-spacing:.25px;text-align:center">CLOSE</div>
<div class="a t" style="left:1070px;top:765px;width:120px;height:40px;border-radius:4px;background:#ab40c9;color:#fff;font-size:14px;line-height:38px;letter-spacing:.25px;text-align:center">SAVE</div>
</div>
</body></html>
